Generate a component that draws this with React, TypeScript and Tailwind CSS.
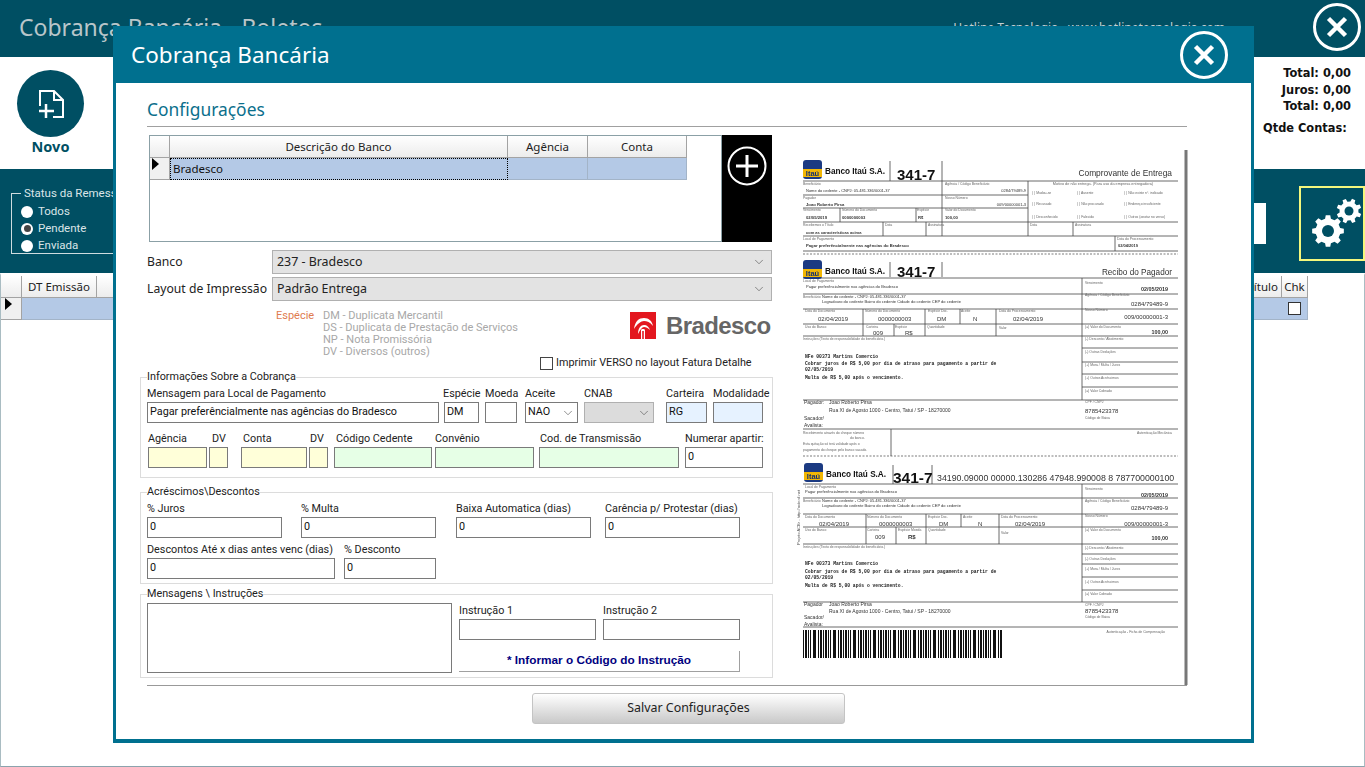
import { ChevronDown } from "lucide-react";

type Txt = [number, number, number, string, ("b" | "e" | "be" | "m")?];

const LINES: [number, number, number, number][] = [
  // comprovante
  [803, 181, 1178, 181], [803, 195, 1028, 195], [803, 208, 1028, 208], [803, 222, 1178, 222],
  [803, 236, 1178, 236], [803, 251, 1178, 251], [890, 161, 890, 181], [942, 161, 942, 236],
  [1028, 181, 1028, 236], [840, 208, 840, 222], [916, 208, 916, 222], [883, 222, 883, 236],
  [926, 222, 926, 236], [1073, 222, 1073, 236], [1115, 236, 1115, 251],
  // recibo
  [890, 262, 890, 277], [942, 262, 942, 277], [803, 278, 1178, 278], [803, 294, 1178, 294],
  [803, 309, 1178, 309], [803, 324, 1178, 324], [803, 336, 1178, 336], [1082, 348, 1178, 348],
  [1082, 362, 1178, 362], [1082, 374, 1178, 374], [1082, 387, 1178, 387], [803, 400, 1178, 400],
  [803, 429, 1178, 429], [1082, 278, 1082, 400], [863, 309, 863, 336], [894, 324, 894, 336],
  [925, 309, 925, 336], [960, 309, 960, 324], [996, 309, 996, 336], [891, 429, 891, 456],
  // ficha
  [893, 465, 893, 484], [932, 465, 932, 484], [803, 484, 1178, 484], [803, 498, 1178, 498],
  [803, 514, 1178, 514], [803, 527, 1178, 527], [803, 544, 1178, 544], [1082, 554, 1178, 554],
  [1082, 564, 1178, 564], [1082, 577, 1178, 577], [1082, 590, 1178, 590], [803, 602, 1178, 602],
  [803, 627, 1178, 627], [1082, 484, 1082, 602], [866, 514, 866, 544], [896, 527, 896, 544],
  [926, 514, 926, 544], [961, 514, 961, 527], [999, 514, 999, 544],
];

const NOME = "Nome do cedente - CNPJ: 05.481.336/0001-37";
const LOGRA = "Logradouro do cedente  Bairro do cedente Cidade do cedente  CEP do cedente";
const LOCAL = "Pagar preferêncialmente nas agências do Bradesco";
const S = 3.4;

const TEXTS: Txt[] = [
  [1172, 176, 8.4, "Comprovante de Entrega", "e"],
  [803, 185, S, "Beneficiário"], [806, 192, 4, NOME], [945, 185, S, "Agência / Código Beneficiário"],
  [1026, 192, 4, "0284/79489-9", "e"], [1103, 185, 3.8, "Motivo de não entrega. (Para uso da empresa entregadora)", "m"],
  [803, 199, S, "Pagador"], [806, 206, 4.2, "Joao Roberto Pirsa", "b"], [945, 199, S, "Nosso Número"],
  [1026, 206, 4, "009/00000001-3", "e"], [803, 211, S, "Vencimento"], [806, 219, 4.2, "02/05/2019", "b"],
  [842, 211, S, "Número do Documento"], [842, 219, 4.2, "0000000003", "b"], [917, 211, S, "Espécie"],
  [918, 219, 4.2, "R$", "b"], [945, 211, S, "Valor do Documento"], [945, 219, 4.2, "100,00", "b"],
  [1032, 194, S, "( ) Mudou-se"], [1077, 194, S, "( ) Ausente"], [1124, 194, S, "( ) Não existe nº. indicado"],
  [1032, 205, S, "( ) Recusado"], [1077, 205, S, "( ) Não procurado"], [1124, 205, S, "( ) Endereço insuficiente"],
  [1032, 218, S, "( ) Desconhecido"], [1077, 218, S, "( ) Falecido"], [1124, 218, S, "( ) Outros (anotar no verso)"],
  [803, 226, S, "Recebemos o Título"], [806, 234, 4, "com as características acima", "b"], [885, 226, S, "Data"],
  [928, 226, S, "Assinatura"], [1030, 226, S, "Data"], [1075, 226, S, "Assinatura"], [803, 240, S, "Local de Pagamento"],
  [806, 247, 4.2, LOCAL, "b"], [1117, 240, S, "Data do Processamento"], [1118, 247, 4, "02/04/2019", "b"],

  [1172, 275, 8.2, "Recibo do Pagador", "e"],
  [803, 282, S, "Local de Pagamento"], [806, 288, 4, LOCAL], [1085, 284, S, "Vencimento"],
  [1168, 291, 5.4, "02/05/2019", "be"], [803, 298, S, "Beneficiário"], [822, 298, 4, NOME], [822, 303, 4, LOGRA],
  [1085, 296, S, "Agência / Código Beneficiário"], [1168, 306, 6, "0284/79489-9", "e"],
  [805, 312, S, "Data do Documento"], [818, 321, 6, "02/04/2019"], [865, 312, S, "Número do Documento"],
  [878, 321, 6, "0000000003"], [928, 312, S, "Espécie Doc."], [937, 321, 6, "DM"], [961, 312, S, "Aceite"],
  [973, 321, 6, "N"], [999, 312, S, "Data do Processamento"], [1013, 321, 6, "02/04/2019"],
  [1085, 311, S, "Nosso Número"], [1168, 319, 6, "009/00000001-3", "e"], [805, 328, S, "Uso do Banco"],
  [866, 328, S, "Carteira"], [873, 334.5, 6, "009"], [895, 328, S, "Espécie"], [905, 334.5, 6, "R$"], [927, 328, S, "Quantidade"],
  [999, 329, S, "Valor"], [1085, 328, S, "(=) Valor do Documento"], [1168, 334, 5.4, "100,00", "be"],
  [803, 340, S, "Instruções (Texto de responsabilidade do beneficiário.)"],
  [1085, 340, S, "(-) Desconto / Abatimento"], [1085, 353, S, "(-) Outras Deduções"], [1085, 366, S, "(+) Mora / Multa / Juros"],
  [1085, 379, S, "(+) Outros Acréscimos"], [1085, 392, S, "(=) Valor Cobrado"],
  [804, 404, 5, "Pagador:"], [829, 404, 5, "Joao Roberto Pirsa"], [829, 412, 5, "Rua XI de Agosto 1000  - Centro, Tatui / SP - 18270000"],
  [804, 420, 5, "Sacador/"], [804, 427, 5, "Avalista:"], [1085, 403, S, "CPF / CNPJ"], [1085, 413, 6, "8785423378"],
  [1085, 419, S, "Código de Baixa"], [803, 434, S, "Recebimento através do cheque número"], [850, 439, S, "do banco."],
  [803, 445, S, "Esta quitação só terá validade após o"], [803, 451, S, "pagamento do cheque pelo banco sacado."],
  [1172, 434, S, "Autenticação Mecânica", "e"],

  [937, 481, 8.8, "34190.09000 00000.130286 47948.990008 8 787700000100"],
  [805, 488, S, "Local de Pagamento"], [805, 493, 4, LOCAL], [1085, 490, S, "Vencimento"], [1168, 497, 5.4, "02/05/2019", "be"],
  [803, 502, S, "Beneficiário"], [822, 502, 4, NOME], [822, 507, 4, LOGRA], [1085, 502, S, "Agência / Código Beneficiário"],
  [1168, 510, 6, "0284/79489-9", "e"], [805, 518, S, "Data do Documento"], [819, 526, 6, "02/04/2019"],
  [867, 518, S, "Número do Documento"], [879, 526, 6, "0000000003"], [928, 518, S, "Espécie Doc."], [939, 526, 6, "DM"],
  [963, 518, S, "Aceite"], [978, 526, 6, "N"], [1001, 518, S, "Data do Processamento"], [1015, 526, 6, "02/04/2019"],
  [1085, 517, S, "Nosso Número"], [1168, 526, 6, "009/00000001-3", "e"], [805, 531, S, "Uso do Banco"], [867, 531, S, "Carteira"],
  [875, 539, 6, "009"], [898, 531, S, "Espécie Moeda"], [908, 539, 6, "R$", "b"], [928, 531, S, "Quantidade"], [1001, 534, S, "Valor"],
  [1085, 531, S, "(=) Valor do Documento"], [1168, 540, 5.4, "100,00", "be"],
  [803, 548, S, "Instruções (Texto de responsabilidade do beneficiário.)"],
  [1085, 549, S, "(-) Desconto / Abatimento"], [1085, 560, S, "(-) Outras Deduções"], [1085, 570, S, "(+) Mora / Multa / Juros"],
  [1085, 583, S, "(+) Outros Acréscimos"], [1085, 595, S, "(=) Valor Cobrado"],
  [804, 606, 5, "Pagador"], [829, 606, 5, "Joao Roberto Pirsa"], [829, 613, 5, "Rua XI de Agosto 1000  - Centro, Tatui / SP - 18270000"],
  [804, 619, 5, "Sacador/"], [804, 626, 5, "Avalista:"], [1085, 606, S, "CPF / CNPJ"], [1085, 613, 6, "8785423378"],
  [1085, 618, S, "Código de Baixa"], [1165, 633, S, "Autenticação - Ficha de Compensação", "e"],
];

const MONO: [number, string][] = [
  [358, "NFe 00373 Martins Comercio"],
  [365, "Cobrar juros de R$ 5,00 por dia de atraso para pagamento a partir de"],
  [371, "02/05/2019"],
  [379, "Multa de R$ 5,00 após o vencimento."],
  [565, "NFe 00373 Martins Comercio"],
  [573, "Cobrar juros de R$ 5,00 por dia de atraso para pagamento a partir de"],
  [579, "02/05/2019"],
  [587, "Multa de R$ 5,00 após o vencimento."],
];

function ItauLogo({ x, y }: { x: number; y: number }) {
  return (
    <g>
      <rect x={x} y={y} width={19} height={19} rx={3} fill="#1b3a82" />
      <rect x={x} y={y + 9} width={19} height={8} fill="#f2b705" />
      <text x={x + 9.5} y={y + 15.5} fontSize={7.5} fontWeight={700} fill="#14306f" textAnchor="middle">
        Itaú
      </text>
      <text x={x + 22} y={y + 14} fontSize={8.2} fontWeight={700} fill="#111">
        Banco Itaú S.A.
      </text>
    </g>
  );
}

function Boleto() {
  // barras do codigo de barras, padrao fixo
  const bars: [number, number][] = [];
  let bx = 803;
  let i = 0;
  while (bx < 1003) {
    const w = [1, 2, 1, 1, 3, 1, 2][i % 7];
    const gap = [1, 1, 2, 1, 1, 2, 1][(i * 3) % 7];
    bars.push([bx, w]);
    bx += w + gap;
    i++;
  }
  return (
    <svg
      viewBox="790 145 400 540"
      className="mt-[10px] ml-[17px] block h-[540px] w-[400px] shrink-0 font-['Liberation_Sans',sans-serif] blur-[0.35px]"
    >
      <rect x={1184.5} y={150} width={3} height={535} fill="#777" />
      {LINES.map(([a, b, c, d], k) => (
        <line key={k} x1={a} y1={b} x2={c} y2={d} stroke="#444" strokeWidth={0.8} />
      ))}
      <line x1={803} y1={254} x2={1178} y2={254} stroke="#444" strokeWidth={0.7} strokeDasharray="2 1.5" />
      <line x1={803} y1={456} x2={1178} y2={456} stroke="#444" strokeWidth={0.7} strokeDasharray="2 1.5" />

      <ItauLogo x={803} y={160} />
      <ItauLogo x={803} y={260} />
      <ItauLogo x={804} y={463} />
      <text x={897} y={180} fontSize={15} fontWeight={700} fill="#111">341-7</text>
      <text x={897} y={277} fontSize={15} fontWeight={700} fill="#111">341-7</text>
      <text x={893} y={483} fontSize={15.5} fontWeight={700} fill="#111">341-7</text>

      {TEXTS.map(([x, y, size, str, flag], k) => (
        <text
          key={k}
          x={x}
          y={y}
          fontSize={size}
          fontWeight={flag === "b" || flag === "be" ? 700 : 400}
          textAnchor={flag === "e" || flag === "be" ? "end" : flag === "m" ? "middle" : "start"}
          fill={size < 4 ? "#666" : "#333"}
        >
          {str}
        </text>
      ))}
      {MONO.map(([y, str], k) => (
        <text key={k} x={805} y={y} fontSize={4.7} fontWeight={700} fontFamily="'Liberation Mono', monospace" fill="#222">
          {str}
        </text>
      ))}
      <text x={800} y={545} fontSize={4} fill="#555" transform="rotate(-90 800 545)">
        Projeto ACBr - http://acbr.sf.net
      </text>
      {bars.map(([x, w], k) => (
        <rect key={k} x={x} y={630} width={w} height={28} fill="#111" />
      ))}
    </svg>
  );
}

function gearPath(cx: number, cy: number, outer: number, inner: number, teeth: number) {
  const pts: string[] = [];
  const step = (Math.PI * 2) / teeth;
  for (let t = 0; t < teeth; t++) {
    const a = t * step;
    const seq: [number, number][] = [
      [a - step * 0.3, inner],
      [a - step * 0.18, outer],
      [a + step * 0.18, outer],
      [a + step * 0.3, inner],
    ];
    for (const [ang, r] of seq) {
      pts.push(`${(cx + Math.cos(ang) * r).toFixed(2)},${(cy + Math.sin(ang) * r).toFixed(2)}`);
    }
  }
  return `M${pts.join("L")}Z`;
}

function Gears() {
  return (
    <svg viewBox="1299 186 65 74" className="h-[74px] w-[65px]">
      <path d={gearPath(1328, 231, 16, 12.5, 8)} fill="#fff" />
      <circle cx={1328} cy={231} r={6} fill="#004f63" />
      <path d={gearPath(1349, 211, 12.5, 9.5, 8)} fill="#fff" transform="rotate(22 1349 211)" />
      <circle cx={1349} cy={211} r={4.5} fill="#004f63" />
    </svg>
  );
}

function CloseBtn() {
  return (
    <svg viewBox="0 0 48 48" className="h-[48px] w-[48px]">
      <circle cx={24} cy={24} r={22.5} fill="none" stroke="#fff" strokeWidth={3} />
      <path d="M15.5 15.5 32.5 32.5M32.5 15.5 15.5 32.5" stroke="#fff" strokeWidth={4.5} strokeLinecap="butt" />
    </svg>
  );
}

function RowArrow() {
  return (
    <svg viewBox="0 0 7 12" className="h-[12px] w-[7px] self-start">
      <path d="M0 0 7 6 0 12Z" fill="#000" />
    </svg>
  );
}

function Radio({ label, on }: { label: string; on?: boolean }) {
  return (
    <div className="flex h-[17px] items-center gap-[5px] pl-[9px]">
      <span className="flex h-[12px] w-[12px] items-center justify-center rounded-full bg-white">
        {on && <span className="h-[7px] w-[7px] rounded-full bg-[#444]" />}
      </span>
      <span>{label}</span>
    </div>
  );
}

function Field({
  label,
  value,
  className,
  boxClass = "bg-white",
  labelClass = "",
}: {
  label: string;
  value?: string;
  className: string;
  boxClass?: string;
  labelClass?: string;
}) {
  return (
    <div className={`flex shrink-0 flex-col ${className}`}>
      <div className={`h-[16px] text-[10.8px] leading-[16px] whitespace-nowrap text-[#222] ${labelClass}`}>{label}</div>
      <div className={`flex h-[21px] items-center border border-[#7a7a7a] pl-[2px] text-[10.8px] text-[#111] ${boxClass}`}>
        {value}
      </div>
    </div>
  );
}

function GroupBox({ title, className, children }: { title: string; className: string; children: React.ReactNode }) {
  return (
    <fieldset className={`border border-[#dcdcdc] pl-[6px] font-['Roboto',sans-serif] ${className}`}>
      <legend className="h-[14px] text-[10.8px] leading-[14px] text-[#222]">{title}</legend>
      {children}
    </fieldset>
  );
}

function HeadCell({ label, className }: { label: string; className: string }) {
  return (
    <div
      className={`flex h-[22px] items-center justify-center border-r border-b border-[#a3a3a3] bg-linear-to-b from-white to-[#ececec] text-[11.5px] text-[#222] ${className}`}
    >
      {label}
    </div>
  );
}

function SelectBox({ value }: { value: string }) {
  return (
    <div className="flex h-[24px] w-[500px] items-center justify-between border border-[#b0b0b0] bg-[#e3e3e3] pr-[5px] pl-[4px] text-[12.4px] text-[#222]">
      <span className="pt-[1px]">{value}</span>
      <ChevronDown size={14} strokeWidth={1} color="#444" />
    </div>
  );
}

export default function App() {
  return (
    <div className="relative flex h-[767px] w-[1365px] flex-col overflow-hidden bg-white font-['Noto_Sans',sans-serif]">
      {/* tela de fundo */}
      <header className="flex h-[57px] shrink-0 items-start justify-between bg-[#004f63] pr-[4px] pl-[19px]">
        <h1 className="mt-[10px] text-[23px] leading-[34px] font-normal text-[#b9c6ca]">Cobrança Bancária - Boletos</h1>
        <div className="flex">
          <span className="mt-[19px] mr-[88px] text-[12px] text-[#c4d0d3]">Hotline Tecnologia - www.hotlinetecnologia.com</span>
          <div className="mt-[3px]">
            <CloseBtn />
          </div>
        </div>
      </header>

      <section className="flex h-[112px] shrink-0 justify-between bg-white pr-[14px] pl-[17px]">
        <div className="mt-[13px] flex w-[67px] flex-col items-center">
          <div className="flex h-[67px] w-[67px] items-center justify-center rounded-full bg-[#004f63]">
            <svg viewBox="0 0 26 30" className="h-[30px] w-[26px]" fill="none" stroke="#fff" strokeWidth={2}>
              <path d="M2 17V2h14l9 9v17H15" />
              <path d="M16 2v9h9" />
              <path d="M8 15v14M1 22h15" strokeWidth={2.5} />
            </svg>
          </div>
          <span className="-mt-[1px] text-[14.5px] leading-[20px] font-bold text-[#004f63]">Novo</span>
        </div>
        <div className="mt-[8px] flex w-[88px] flex-col font-['DejaVu_Sans',sans-serif] text-[11.4px] font-bold text-[#111]">
          <div className="text-right leading-[16.5px]">Total: 0,00</div>
          <div className="text-right leading-[16.5px]">Juros: 0,00</div>
          <div className="text-right leading-[16.5px]">Total: 0,00</div>
          <div className="mt-[5px] leading-[16px] whitespace-nowrap">Qtde Contas:</div>
        </div>
      </section>

      <section className="flex h-[104px] shrink-0 items-start bg-[#004f63]">
        <fieldset className="mt-[17px] ml-[11px] h-[68px] w-[150px] border border-[#cfdcdf] font-['Roboto',sans-serif] text-[11.5px] text-[#dbe5e8]">
          <legend className="ml-[9px] h-[14px] px-[3px] leading-[14px]">Status da Remessa</legend>
          <div className="pt-[3px]">
            <Radio label="Todos" />
            <Radio label="Pendente" on />
            <Radio label="Enviada" />
          </div>
        </fieldset>
        <div className="mt-[34px] ml-auto h-[41px] w-[200px] bg-white" />
        <div className="mt-[17px] ml-[33px] h-[75px] w-[66px] border-2 border-[#f4f77d]">
          <div className="-m-[2px]">
            <Gears />
          </div>
        </div>
      </section>

      <section className="min-h-0 flex-1 border-x border-t-2 border-b border-x-[#a9bcc2] border-t-white border-b-[#8ba3ad] bg-white pt-[1px]">
        <div className="flex">
          <HeadCell label="" className="w-[21px]" />
          <HeadCell label="DT Emissão" className="w-[75px]" />
          <HeadCell label="Vencimento" className="w-[1105px]" />
          <HeadCell label="Título" className="w-[80px] justify-end pr-[3px]" />
          <HeadCell label="Chk" className="w-[26px]" />
        </div>
        <div className="flex h-[22px]">
          <div className="flex w-[21px] border-r border-b border-[#a3a3a3] bg-[#f0f0f0] pl-[4px]">
            <RowArrow />
          </div>
          <div className="w-[1260px] border-b border-[#a3b4c8] bg-[#b4c9e6]" />
          <div className="flex w-[26px] items-center justify-center border-r border-b border-[#a3b4c8] bg-[#b4c9e6]">
            <span className="h-[13px] w-[13px] border border-[#333] bg-white" />
          </div>
        </div>
      </section>

      {/* janela de configuracoes */}
      <div className="absolute top-[26px] left-[113px] flex h-[717px] w-[1141px] flex-col border-x-[3px] border-b-[4px] border-[#00708f] bg-white">
        <div className="-mx-[3px] flex h-[57px] shrink-0 items-center justify-between bg-[#00708f] pr-[26px] pl-[18px]">
          <h2 className="text-[22.5px] font-normal text-white">Cobrança Bancária</h2>
          <CloseBtn />
        </div>

        <div className="flex flex-1 flex-col pl-[24px]">
          <h3 className="mt-[14px] ml-[7px] h-[24px] text-[17.4px] leading-[24px] font-normal text-[#0b6f8c]">Configurações</h3>
          <div className="mt-[5px] ml-[7px] h-px w-[1040px] bg-[#a0a0a0]" />

          <div className="mt-[8px] flex h-[550px] items-start">
            <div className="flex w-[633px] shrink-0 flex-col">
              <div className="ml-[9px] flex h-[107px]">
                <div className="w-[573px] border border-[#8ba0a6] bg-white">
                  <div className="flex">
                    <HeadCell label="" className="w-[20px]" />
                    <HeadCell label="Descrição do Banco" className="w-[338px]" />
                    <HeadCell label="Agência" className="w-[80px]" />
                    <HeadCell label="Conta" className="w-[99px]" />
                  </div>
                  <div className="flex h-[22px]">
                    <div className="flex w-[20px] border-r border-b border-[#a3a3a3] bg-[#f0f0f0] pl-[2px]">
                      <RowArrow />
                    </div>
                    <div className="flex w-[338px] items-center border border-dotted border-black bg-[#b4c9e6] pl-[2px] text-[11.5px] text-[#111]">
                      Bradesco
                    </div>
                    <div className="w-[80px] border-r border-b border-[#a3b4c8] bg-[#b4c9e6]" />
                    <div className="w-[99px] border-r border-b border-[#a3b4c8] bg-[#b4c9e6]" />
                  </div>
                </div>
                <div className="flex w-[50px] items-start justify-center bg-black pt-[11px]">
                  <svg viewBox="0 0 40 40" className="h-[40px] w-[40px]" fill="none" stroke="#fff">
                    <circle cx={20} cy={20} r={18.5} strokeWidth={2} />
                    <path d="M20 9v22M9 20h22" strokeWidth={3} />
                  </svg>
                </div>
              </div>

              <div className="mt-[8px] flex items-center">
                <span className="ml-[7px] w-[125px] text-[12.2px] text-[#222]">Banco</span>
                <SelectBox value="237 - Bradesco" />
              </div>
              <div className="mt-[3px] flex items-center">
                <span className="ml-[7px] w-[125px] text-[12.2px] whitespace-nowrap text-[#222]">Layout de Impressão</span>
                <SelectBox value="Padrão Entrega" />
              </div>

              <div className="mt-[9px] flex h-[47px] items-start font-['Roboto',sans-serif] text-[11px] leading-[12px]">
                <span className="ml-[136px] w-[47px] text-[#e07b50]">Espécie</span>
                <div className="flex w-[307px] flex-col text-[#a8a8a8]">
                  <span>DM - Duplicata Mercantil</span>
                  <span>DS - Duplicata de Prestação de Serviços</span>
                  <span>NP - Nota Promissória</span>
                  <span>DV - Diversos (outros)</span>
                </div>
                <div className="mt-[2px] flex items-center">
                  <svg viewBox="0 0 26 27" className="h-[27px] w-[26px]">
                    <rect width={26} height={27} fill="#e3171f" />
                    <path d="M4 17C5 9 9 6 14 6s8 3 9 8c-3-4-6-5-9-5S7 12 4 17Z" fill="#fff" />
                    <path d="M8 22c0-6 3-9 6-9s5 2 6 5c-2-2-4-3-6-3s-4 3-6 7Z" fill="#fff" />
                    <path d="M11 27V18c0-1.500 4-1.500 4 0v9h-1.200V19h-1.600v8Z" fill="#fff" />
                  </svg>
                  <span className="ml-[10px] font-['Liberation_Sans',sans-serif] text-[24px] leading-[27px] font-bold tracking-[-0.6px] text-[#666]">
                    Bradesco
                  </span>
                </div>
              </div>

              <div className="flex h-[13px] items-center font-['Roboto',sans-serif]">
                <span className="ml-[400px] h-[13px] w-[13px] shrink-0 border border-[#444] bg-white" />
                <span className="ml-[3px] text-[10.8px] whitespace-nowrap text-[#222]">Imprimir VERSO no layout Fatura Detalhe</span>
              </div>

              <GroupBox title="Informações Sobre a Cobrança" className="h-[108px]">
                <div className="flex pt-[2px]">
                  <Field label="Mensagem para Local de Pagamento" value="Pagar preferêncialmente nas agências do Bradesco" className="w-[292px]" />
                  <Field label="Espécie" value="DM" className="ml-[5px] w-[35px]" labelClass="-ml-[1px]" />
                  <Field label="Moeda" className="ml-[6px] w-[32px]" />
                  <div className="ml-[8px] flex w-[53px] shrink-0 flex-col">
                    <div className="h-[16px] text-[10.8px] leading-[16px] text-[#222]">Aceite</div>
                    <div className="flex h-[21px] items-center justify-between border border-[#7a7a7a] pr-[2px] pl-[2px] text-[10.8px] text-[#111]">
                      NAO
                      <ChevronDown size={14} strokeWidth={1} color="#444" />
                    </div>
                  </div>
                  <div className="ml-[6px] flex w-[70px] shrink-0 flex-col">
                    <div className="h-[16px] text-[10.8px] leading-[16px] text-[#222]">CNAB</div>
                    <div className="flex h-[21px] items-center justify-end border border-[#b0b0b0] bg-[#dcdcdc] pr-[2px]">
                      <ChevronDown size={14} strokeWidth={1} color="#444" />
                    </div>
                  </div>
                  <Field label="Carteira" value="RG" className="ml-[12px] w-[41px]" boxClass="bg-[#e6f2ff]" />
                  <Field label="Modalidade" className="ml-[6px] w-[50px]" boxClass="bg-[#e6f2ff]" />
                </div>
                <div className="mt-[8px] flex">
                  <Field label="Agência" className="ml-[1px] w-[59px]" boxClass="bg-[#ffffd9]" />
                  <Field label="DV" className="ml-[2px] w-[19px]" boxClass="bg-[#ffffd9]" labelClass="pl-[3px]" />
                  <Field label="Conta" className="ml-[13px] w-[66px]" boxClass="bg-[#ffffd9]" labelClass="pl-[2px]" />
                  <Field label="DV" className="ml-[2px] w-[19px]" boxClass="bg-[#ffffd9]" labelClass="pl-[1px]" />
                  <Field label="Código Cedente" className="ml-[6px] w-[98px]" boxClass="bg-[#e6ffe6]" labelClass="pl-[2px]" />
                  <Field label="Convênio" className="ml-[3px] w-[99px]" boxClass="bg-[#e6ffe6]" />
                  <Field label="Cod. de Transmissão" className="ml-[5px] w-[140px]" boxClass="bg-[#e6ffe6]" labelClass="pl-[1px]" />
                  <Field label="Numerar apartir:" value="0" className="ml-[6px] w-[78px]" />
                </div>
              </GroupBox>

              <GroupBox title="Acréscimos\Descontos" className="mt-[7px] h-[99px]">
                <div className="flex pt-[2px]">
                  <Field label="% Juros" value="0" className="w-[135px]" />
                  <Field label="% Multa" value="0" className="ml-[19px] w-[135px]" />
                  <Field label="Baixa Automatica (dias)" value="0" className="ml-[20px] w-[135px]" />
                  <Field label="Carência p/ Protestar (dias)" value="0" className="ml-[14px] w-[135px]" />
                </div>
                <div className="mt-[4px] flex">
                  <Field label="Descontos Até x dias antes venc (dias)" value="0" className="w-[188px]" />
                  <Field label="% Desconto" value="0" className="ml-[9px] w-[92px]" />
                </div>
              </GroupBox>

              <GroupBox title="Mensagens \ Instruções" className="mt-[3px] h-[91px]">
                <div className="flex pt-[2px]">
                  <div className="h-[70px] w-[305px] border border-[#7a7a7a] bg-white" />
                  <div className="ml-[7px] flex flex-col">
                    <div className="flex">
                      <Field label="Instrução 1" className="w-[137px]" />
                      <Field label="Instrução 2" className="ml-[7px] w-[137px]" />
                    </div>
                    <div className="mt-[11px] flex h-[21px] w-[281px] items-center justify-center border-r border-b border-[#a0a0a0] font-['Liberation_Sans',sans-serif] text-[11.8px] font-bold text-[#000080]">
                      * Informar o Código do Instrução
                    </div>
                  </div>
                </div>
              </GroupBox>
            </div>
            <Boleto />
          </div>

          <div className="ml-[7px] h-px w-[1040px] bg-[#999]" />
          <button className="mt-[7px] ml-[392px] h-[31px] w-[313px] rounded-[3px] border border-[#c4c4c4] bg-linear-to-b from-white to-[#c9c9c9] text-[12.4px] text-[#222]">
            Salvar Configurações
          </button>
        </div>
      </div>
    </div>
  );
}
